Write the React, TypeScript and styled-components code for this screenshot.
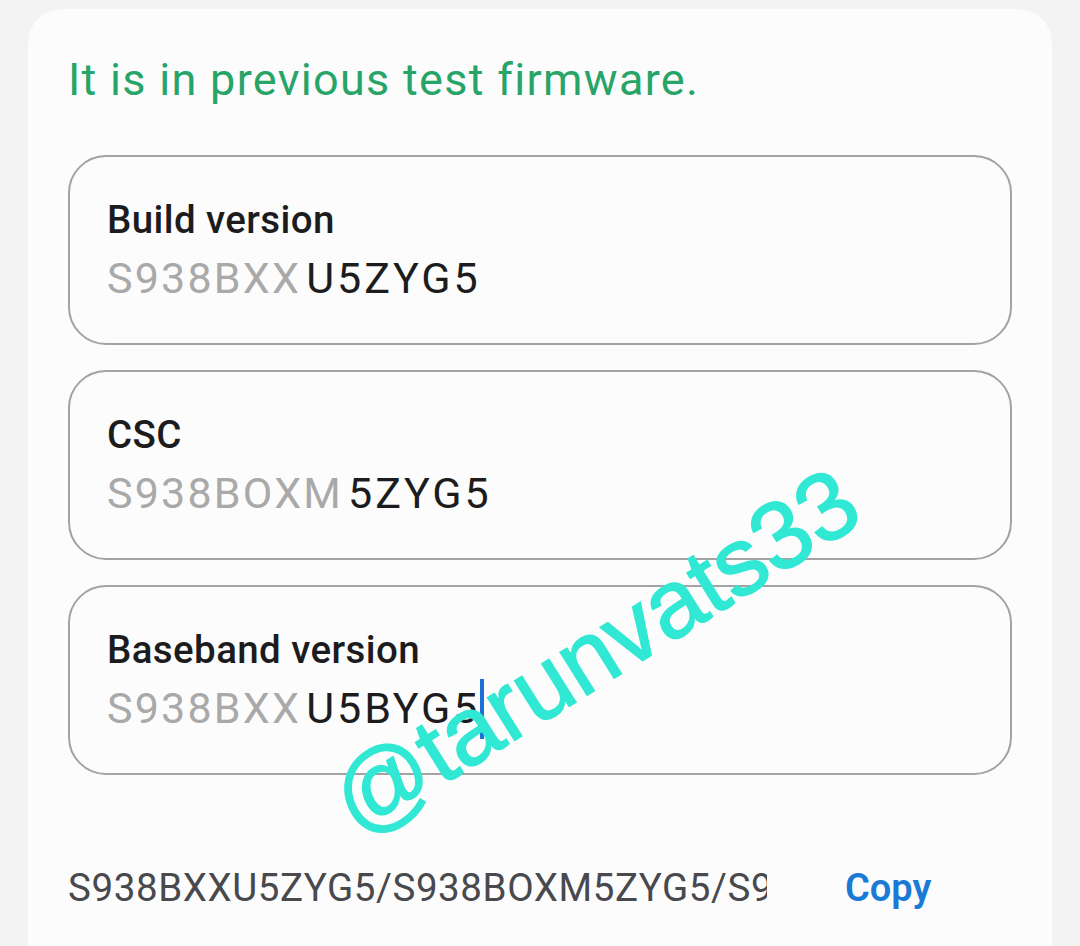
import React from "react";
import styled, { createGlobalStyle } from "styled-components";

const Global = createGlobalStyle`
  html, body { margin: 0; padding: 0; background: #f3f3f3; }
  body { font-family: Roboto, "Noto Sans", sans-serif; overflow: hidden; }
`;

const Page = styled.div`
  width: 1080px;
  height: 946px;
  padding: 9px 28px 0 28px;
  box-sizing: border-box;
  overflow: hidden;
  position: relative;
`;

const Card = styled.div`
  background: #fcfcfc;
  border-radius: 34px;
  padding: 46px 40px 60px 40px;
  min-height: 1000px;
  box-sizing: border-box;
  display: flex;
  flex-direction: column;
`;

const Notice = styled.div`
  color: #27a468;
  font-size: 45px;
  line-height: 50px;
  letter-spacing: 1.3px;
  margin-bottom: 50px;
`;

const Fields = styled.div`
  display: flex;
  flex-direction: column;
  gap: 25px;
`;

const Field = styled.div`
  height: 190px;
  box-sizing: border-box;
  border: 2px solid #a3a3a3;
  border-radius: 38px;
  padding: 43px 37px 0 37px;
  display: flex;
  flex-direction: column;
`;

const Label = styled.div`
  font-size: 38.5px;
  font-weight: 500;
  color: #1c1c1e;
  line-height: 40px;
  letter-spacing: 0.4px;
`;

const Value = styled.div`
  margin-top: 15px;
  font-size: 43px;
  line-height: 46px;
  letter-spacing: 2.2px;
  display: flex;
  align-items: center;
`;

const Prefix = styled.span`
  color: #a9a9a9;
`;

const Suffix = styled.span`
  color: #1c1c1e;
  margin-left: 5px;
  letter-spacing: 3px;
  position: relative;
`;

const Caret = styled.span`
  position: absolute;
  right: -3px;
  top: -6px;
  width: 4px;
  height: 60px;
  background: #1f6fd8;
`;

const Footer = styled.div`
  margin-top: 90px;
  display: flex;
  align-items: center;
`;

const Combined = styled.div`
  width: 699px;
  overflow: hidden;
  white-space: nowrap;
  font-size: 38.5px;
  color: #48484d;
  letter-spacing: 0.6px;
`;

const CopyButton = styled.div`
  margin-left: 78px;
  color: #1a7ad6;
  font-size: 38px;
  font-weight: 600;
`;

const Watermark = styled.div`
  position: absolute;
  left: 341px;
  top: 762px;
  transform: rotate(-32deg);
  transform-origin: left center;
  font-family: "Liberation Sans", Arial, sans-serif;
  font-size: 96px;
  color: #30e8d3;
  -webkit-text-stroke: 1.5px #30e8d3;
  white-space: nowrap;
  pointer-events: none;
  line-height: 1;
`;

const fields = [
  { label: "Build version", prefix: "S938BXX", suffix: "U5ZYG5", caret: false },
  { label: "CSC", prefix: "S938BOXM", suffix: "5ZYG5", caret: false },
  { label: "Baseband version", prefix: "S938BXX", suffix: "U5BYG5", caret: true },
];

export default function App() {
  return (
    <Page>
      <Global />
      <Card>
        <Notice>It is in previous test firmware.</Notice>
        <Fields>
          {fields.map((f) => (
            <Field key={f.label}>
              <Label>{f.label}</Label>
              <Value>
                <Prefix>{f.prefix}</Prefix>
                <Suffix>
                  {f.suffix}
                  {f.caret && <Caret />}
                </Suffix>
              </Value>
            </Field>
          ))}
        </Fields>
        <Footer>
          <Combined>S938BXXU5ZYG5/S938BOXM5ZYG5/S938BXXU5BYG5</Combined>
          <CopyButton>Copy</CopyButton>
        </Footer>
      </Card>
      <Watermark>@tarunvats33</Watermark>
    </Page>
  );
}
